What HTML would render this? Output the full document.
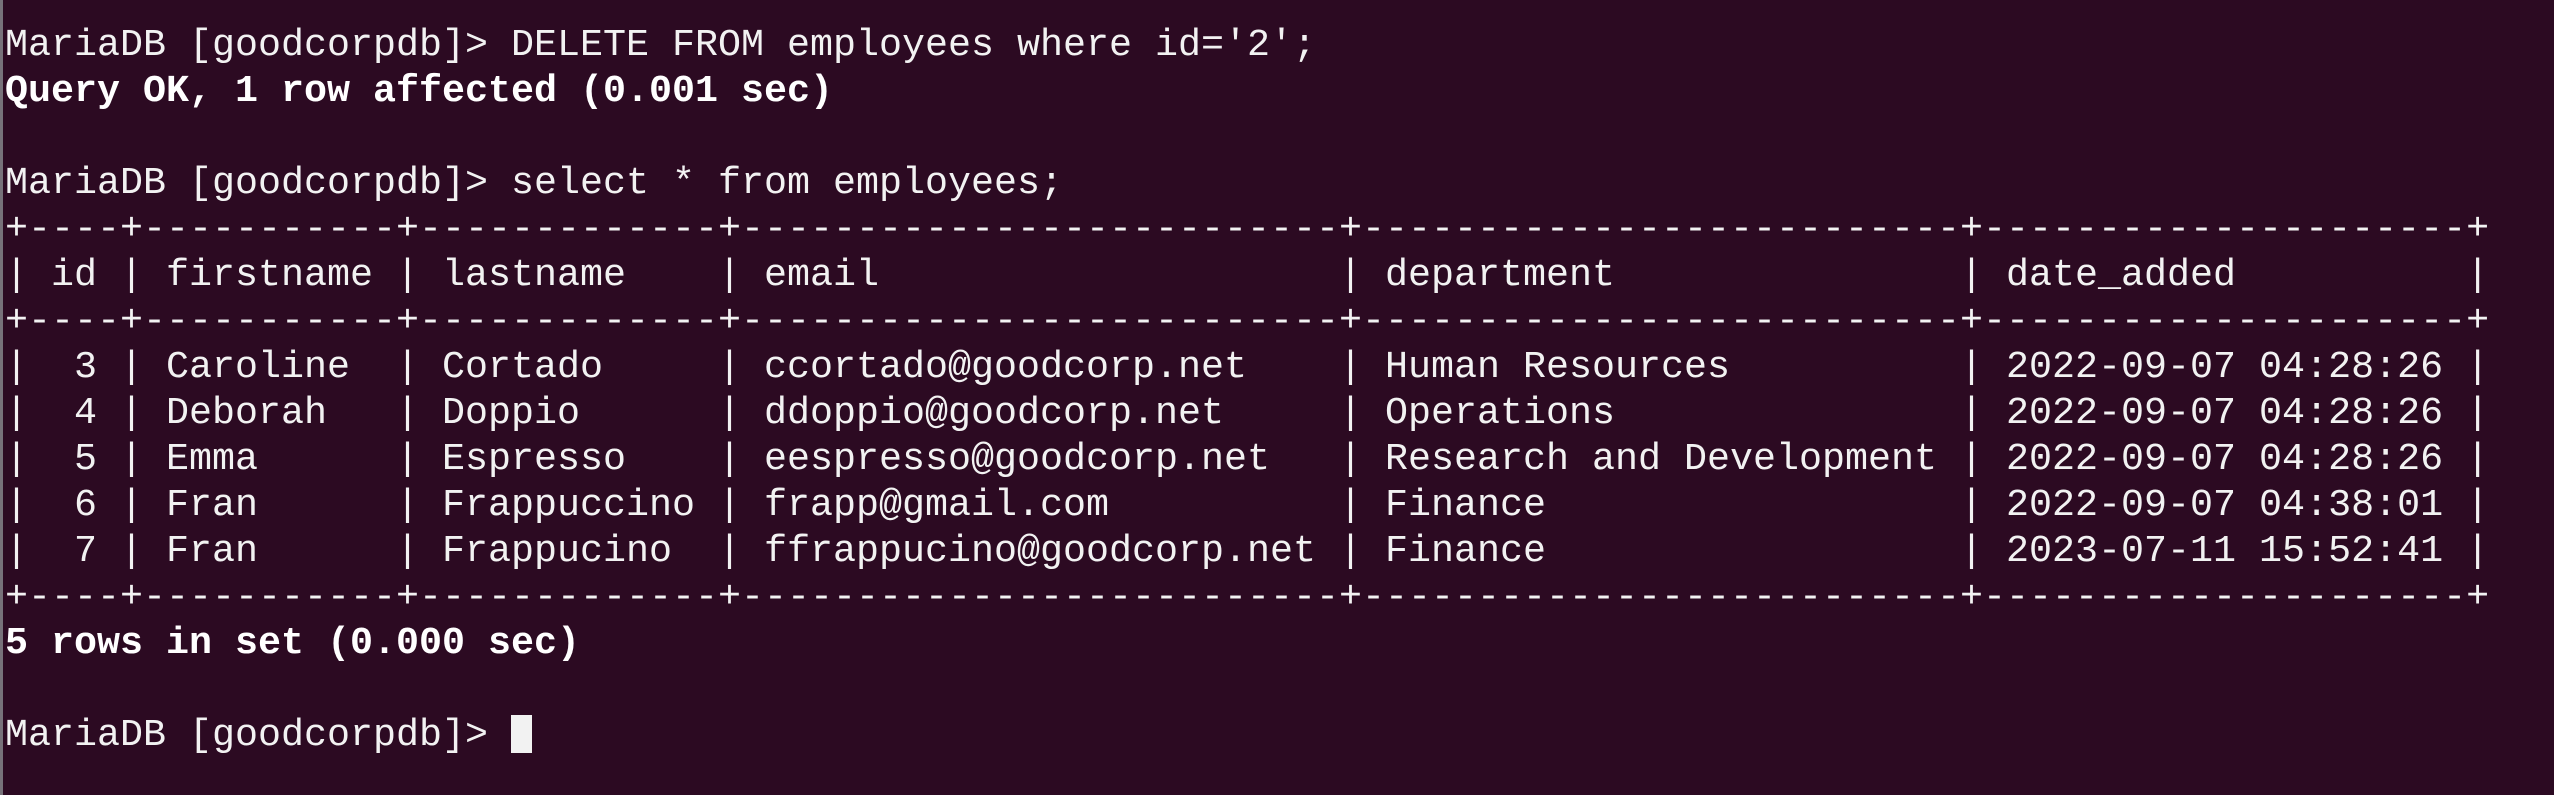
<!DOCTYPE html>
<html><head><meta charset="utf-8"><style>
html,body{margin:0;padding:0;background:#2c0a22;width:2554px;height:795px;overflow:hidden}
body{border-left:3px solid #77727a;box-sizing:border-box}
pre{margin:0;padding:22px 0 0 2px;font-family:"Liberation Mono","DejaVu Sans Mono",monospace;font-size:38.35px;line-height:46px;color:#f2f2f2;white-space:pre}
b{font-weight:bold;color:#fff}
.c{display:inline-block;width:21px;height:38px;background:#f2f2f2;vertical-align:-8px}
</style></head><body><pre>MariaDB [goodcorpdb]&gt; DELETE FROM employees where id='2';
<b>Query OK, 1 row affected (0.001 sec)</b>

MariaDB [goodcorpdb]&gt; select * from employees;
+----+-----------+-------------+--------------------------+--------------------------+---------------------+
| id | firstname | lastname    | email                    | department               | date_added          |
+----+-----------+-------------+--------------------------+--------------------------+---------------------+
|  3 | Caroline  | Cortado     | ccortado@goodcorp.net    | Human Resources          | 2022-09-07 04:28:26 |
|  4 | Deborah   | Doppio      | ddoppio@goodcorp.net     | Operations               | 2022-09-07 04:28:26 |
|  5 | Emma      | Espresso    | eespresso@goodcorp.net   | Research and Development | 2022-09-07 04:28:26 |
|  6 | Fran      | Frappuccino | frapp@gmail.com          | Finance                  | 2022-09-07 04:38:01 |
|  7 | Fran      | Frappucino  | ffrappucino@goodcorp.net | Finance                  | 2023-07-11 15:52:41 |
+----+-----------+-------------+--------------------------+--------------------------+---------------------+
<b>5 rows in set (0.000 sec)</b>

MariaDB [goodcorpdb]&gt; <span class="c"></span></pre></body></html>
